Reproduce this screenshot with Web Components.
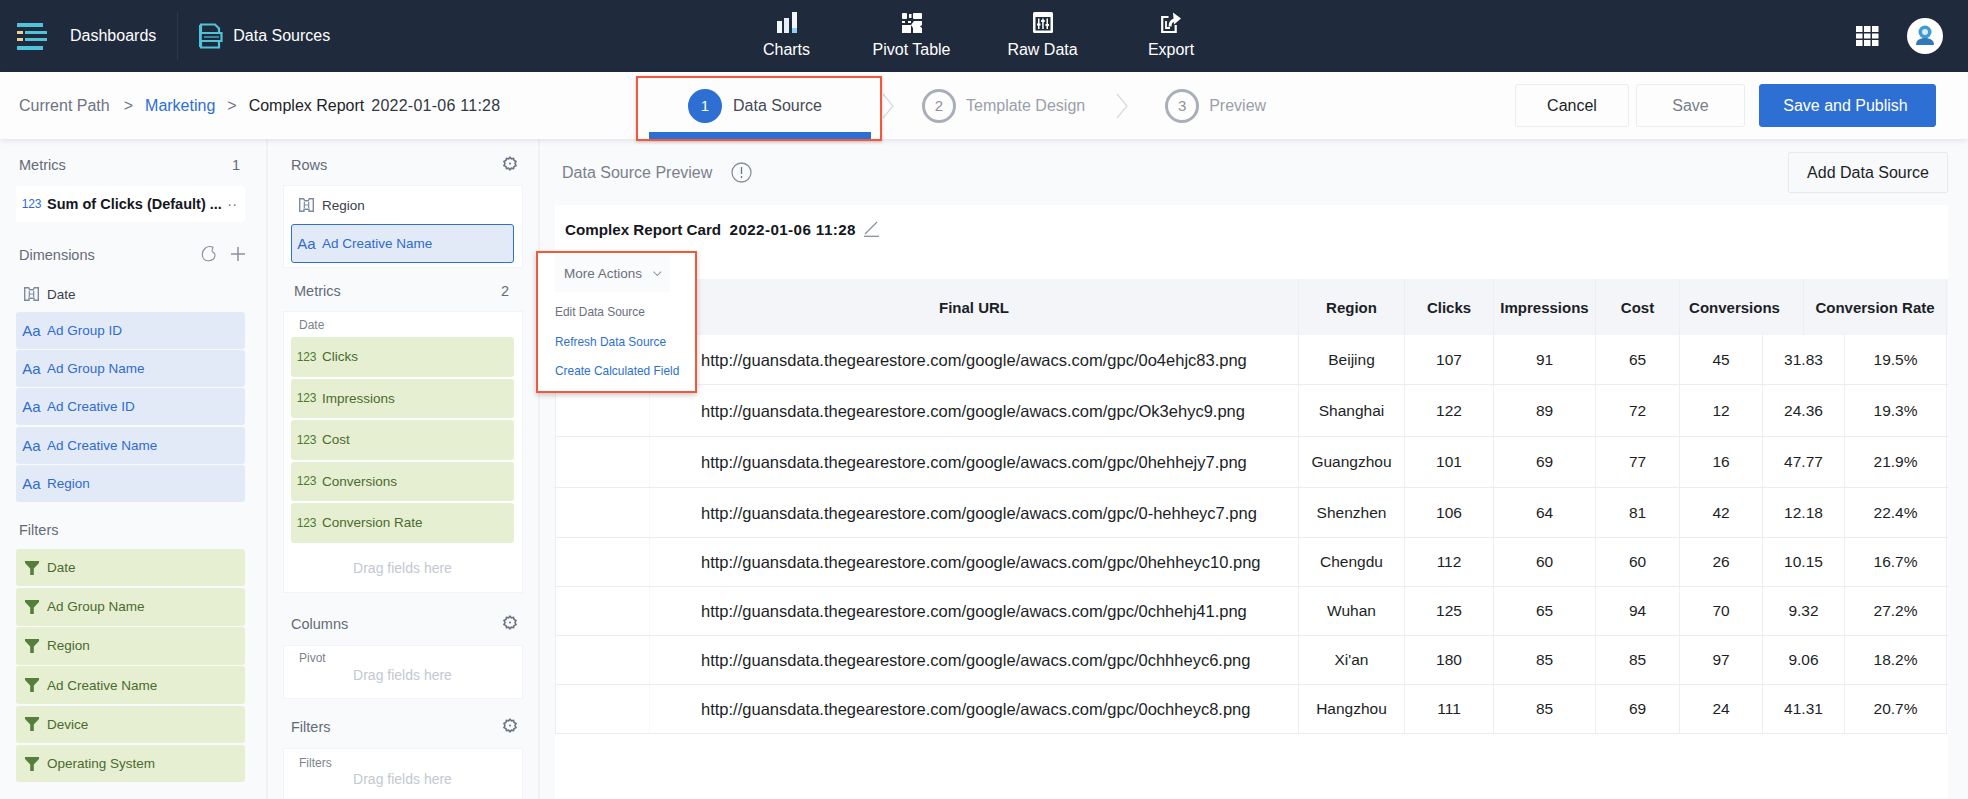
<!DOCTYPE html>
<html lang="en">
<head>
<meta charset="utf-8">
<title>Data Source</title>
<style>
  html, body { margin: 0; height: 799px; overflow: hidden; background: #f9fafc; }
  body { font-family: "Liberation Sans", Arial, sans-serif; color: #1f2430; }
  .page-body { display: flex; height: 660px; }
</style>
</head>
<body>
<top-bar></top-bar>
<sub-bar></sub-bar>
<div class="page-body">
  <left-panel></left-panel>
  <field-panel></field-panel>
  <preview-panel></preview-panel>
</div>

<script>
// All icons live here so the components just ask for them by name
const ICONS = {
  logo: `<svg width="30" height="27" viewBox="0 0 30 27"><g fill="#4fc4d8"><rect x="0" y="0" width="26" height="4"/><rect x="8" y="8" width="22" height="3"/><rect x="8" y="15" width="22" height="3"/><rect x="0" y="23" width="26" height="4"/></g><g fill="#e9d28f"><rect x="0" y="8" width="6" height="3"/><rect x="0" y="15" width="6" height="3"/></g></svg>`,
  sources: `<svg width="24" height="26" viewBox="0 0 24 26" fill="none" stroke="#4fc4d8" stroke-width="2.200"><path d="M2 10V1.500h14l4 4V10"/><path d="M1.500 10h21v8h-21z"/><path d="M5 14h15" stroke-width="1.200"/><path d="M2 18v6.500h18V18"/><path d="M1 2v22" stroke-width="3"/></svg>`,
  charts: `<svg width="20" height="21" viewBox="0 0 20 21"><rect x="0" y="9" width="5" height="12" fill="#f4f7fa"/><rect x="7" y="6" width="5" height="15" fill="#e3eef6"/><rect x="15" y="0" width="5" height="21" fill="#f4f7fa"/><rect x="15" y="16" width="5" height="5" fill="#8fd0f3"/></svg>`,
  pivot: `<svg width="20" height="21" viewBox="0 0 20 21" fill="#fff"><rect x="0" y="1" width="5" height="6" rx="1"/><rect x="7" y="2" width="2.500" height="4"/><rect x="11" y="1" width="9" height="6" rx="1"/><rect x="0" y="9" width="3" height="2"/><rect x="6" y="9" width="3" height="2"/><path d="M12 9h8v4l-2 1.500 2 1.500v5h-9v-5l-2-3z"/><path d="M0 13h9v8H0z"/></svg>`,
  raw: `<svg width="20" height="21" viewBox="0 0 20 21"><rect x="0" y="0" width="20" height="21" rx="1.500" fill="#fff"/><rect x="2.500" y="5" width="15" height="13.500" fill="#202a3d"/><g fill="#fff"><rect x="5" y="6.500" width="1.500" height="10.500"/><rect x="9.200" y="6.500" width="1.500" height="10.500"/><rect x="13.500" y="6.500" width="1.500" height="10.500"/><rect x="4" y="11.500" width="3.500" height="2"/><rect x="8.200" y="8" width="3.500" height="2"/><rect x="12.500" y="12" width="3.500" height="2"/></g></svg>`,
  exp: `<svg width="20" height="21" viewBox="0 0 20 21" fill="none" stroke="#fff" stroke-width="2.200"><path d="M7.500 5H1.200v15h13.500v-7"/><path d="M5 9v7h4" stroke-width="1.800"/><path d="M9 14.500C9 11 10.500 8.500 14 8" stroke-width="3"/><path d="M12 0.500l8 6-7 6z" fill="#fff" stroke="none"/></svg>`,
  apps: `<svg width="23" height="20" viewBox="0 0 23 20" fill="#fff"><rect x="0" y="0" width="6.500" height="6"/><rect x="8" y="0" width="6.500" height="6"/><rect x="16" y="0" width="6.500" height="6"/><rect x="0" y="7.500" width="6.500" height="5"/><rect x="8" y="7.500" width="6.500" height="5"/><rect x="16" y="7.500" width="6.500" height="5"/><rect x="0" y="14" width="6.500" height="6"/><rect x="8" y="14" width="6.500" height="6"/><rect x="16" y="14" width="6.500" height="6"/></svg>`,
  avatar: `<svg width="36" height="36" viewBox="0 0 36 36"><circle cx="18" cy="18" r="18" fill="#fff"/><circle cx="18" cy="14" r="6.500" fill="#3f9ad6"/><circle cx="18" cy="14" r="3" fill="#d6ecf8"/><path d="M9 27c0-5 4-7 9-7s9 2 9 7z" fill="#3277b8"/></svg>`,
  gear: `<svg width="14" height="15" viewBox="0 0 14 15" fill="none" stroke="#6c7380" stroke-width="1.600"><path d="M7 1.200l1.400 1.600 2.100-.3.600 2 1.900 1L12 7.500l1 2-1.900 1-.6 2-2.100-.3L7 13.800l-1.400-1.600-2.100.3-.6-2-1.900-1 1-2-1-2 1.900-1 .6-2 2.100.3z"/><circle cx="7" cy="7.500" r="1" fill="#6c7380" stroke="none"/></svg>`,
  date: `<svg width="15" height="14" viewBox="0 0 15 14" fill="none" stroke="#7d8ba0" stroke-width="1.400"><path d="M.7.700h4l1 2h3.600l1-2h4v12.600h-4.300v-2H5v2H.7z"/><path d="M5.300 4v6M9.700 4v6M5.300 7h4.400" stroke-width="1.200"/></svg>`,
  funnel: `<svg width="14" height="14" viewBox="0 0 14 14" fill="#55803b"><path d="M0 0h14v2L8.800 7.500V14H5.200V7.500L0 2z"/></svg>`,
  cloud: `<svg width="16" height="17" viewBox="0 0 16 17" fill="none" stroke="#8a919d" stroke-width="1.100"><path d="M12 2.500C10.500 1.200 7 1 4.500 3 2 5 1 8 1.500 11c.5 3 3 4.800 6 4.800 3.500 0 6.500-2.300 6.500-5.300 0-1.800-1-3-2.500-3.500-.8-1.500-.3-3 .5-4.500z"/></svg>`,
  plus: `<svg width="14" height="14" viewBox="0 0 14 14" stroke="#8a919d" stroke-width="1.500"><path d="M7 0v14M0 7h14"/></svg>`,
  pencil: `<svg width="15" height="16" viewBox="0 0 15 16" fill="none" stroke="#8a919d" stroke-width="1.300"><path d="M1 13L13 1"/><path d="M0 15.300h15"/></svg>`,
  info: `<svg width="21" height="21" viewBox="0 0 21 21" fill="none" stroke="#8a909b" stroke-width="1.300"><circle cx="10.500" cy="10.500" r="9.500"/><path d="M10.500 5v7M10.500 14v2" stroke="#6d737e"/></svg>`,
};

class TopBar extends HTMLElement {
  constructor() {
    super();
    this.shadow = this.attachShadow({ mode: "open" });
    this.shadow.innerHTML = `
      <style>
        :host { display: flex; height: 72px; background: #202a3d; color: #fff; font-size: 16px; align-items: center; }
        .left { width: 707px; padding-left: 17px; display: flex; align-items: center; flex: none; }
        .dash { margin-left: 23px; }
        .sep { width: 1px; height: 48px; background: #2f394e; margin: 0 21px 0 21px; }
        .src { margin-left: 10px; }
        .left svg { display: block; }
        .nav { display: flex; flex: none; align-self: flex-start; padding-top: 12px; }
        .nav div { display: flex; flex-direction: column; align-items: center; gap: 8px; }
        .nav svg { display: block; }
        .right { margin-left: auto; padding-right: 25px; display: flex; align-items: center; gap: 28px; }
        .right svg { display: block; }
      </style>
      <div class="left">
        ${ICONS.logo}<span class="dash">Dashboards</span>
        <span class="sep"></span>
        ${ICONS.sources}<span class="src">Data Sources</span>
      </div>
      <div class="nav">
        <div style="width:125px">${ICONS.charts}<span>Charts</span></div>
        <div style="width:125px">${ICONS.pivot}<span>Pivot Table</span></div>
        <div style="width:137px">${ICONS.raw}<span>Raw Data</span></div>
        <div style="width:120px">${ICONS.exp}<span>Export</span></div>
      </div>
      <div class="right">${ICONS.apps}${ICONS.avatar}</div>
    `;
  }
}
customElements.define("top-bar", TopBar);

class SubBar extends HTMLElement {
  constructor() {
    super();
    this.shadow = this.attachShadow({ mode: "open" });
    this.shadow.innerHTML = `
      <style>
        :host { display: flex; height: 67px; background: #fdfdfe; font-size: 16px; align-items: center; position: relative; z-index: 2; box-shadow: 0 2px 5px rgba(40,50,70,.1); }
        .crumbs { width: 630px; flex: none; padding-left: 19px; display: flex; color: #6d7480; }
        .crumbs i { font-style: normal; margin: 0 12px 0 14px; }
        .crumbs i.second { margin: 0 12px; }
        .crumbs b { font-weight: 400; color: #2e6fd3; }
        .crumbs .cur { color: #1c1f26; }
        .crumbs .stamp { color: #333842; margin-left: 7px; letter-spacing: .25px; }
        .steps { display: flex; align-items: center; height: 100%; color: #9a9fa8; position: relative; }
        .step { display: flex; align-items: center; gap: 10px; height: 100%; box-sizing: border-box; }
        .num { width: 34px; height: 34px; box-sizing: border-box; border-radius: 50%; border: 3px solid #a9aeb8; display: flex; align-items: center; justify-content: center; font-size: 15px; color: #8d929c; }
        .active { width: 222px; padding-left: 39px; color: #444a55; border-bottom: 7px solid #2e6fd3; padding-top: 7px; gap: 11px; }
        .active .num { background: #2e6fd3; border-color: #2e6fd3; color: #fff; }
        .chev { display: block; margin: 0 37px 0 31px; }
        .first-chev { margin: 0 28px 0 11px; }
        .mark { position: absolute; left: -13px; top: 4px; width: 242px; height: 61px; border: 2px solid #ef5a3c; box-shadow: 0 1px 3px rgba(120,40,20,.3); pointer-events: none; }
        .btns { margin-left: auto; padding-right: 32px; display: flex; align-items: center; }
        .btn { height: 43px; box-sizing: border-box; border: 1px solid #e9ecf1; border-radius: 3px; display: flex; align-items: center; justify-content: center; background: #fdfdfe; }
      </style>
      <div class="crumbs">
        <span>Current Path</span><i>&gt;</i><b>Marketing</b><i class="second">&gt;</i>
        <span class="cur">Complex Report</span><span class="stamp">2022-01-06 11:28</span>
      </div>
      <div class="steps">
        <div class="step active"><span class="num">1</span><span>Data Source</span></div>
        <svg class="chev first-chev" width="12" height="28" viewBox="0 0 12 28" fill="none" stroke="#d5d9e0" stroke-width="1.200"><path d="M1 2l10 12L1 26"/></svg>
        <div class="step"><span class="num">2</span><span>Template Design</span></div>
        <svg class="chev" width="12" height="28" viewBox="0 0 12 28" fill="none" stroke="#d5d9e0" stroke-width="1.200"><path d="M1 2l10 12L1 26"/></svg>
        <div class="step"><span class="num">3</span><span>Preview</span></div>
        <div class="mark"></div>
      </div>
      <div class="btns">
        <div class="btn" style="width:114px;color:#1c1f26">Cancel</div>
        <div class="btn" style="width:109px;margin-left:7px;color:#777d88">Save</div>
        <div class="btn" style="width:177px;margin-left:14px;padding-right:4px;background:#2e6fd3;border-color:#2e6fd3;color:#fff">Save and Publish</div>
      </div>
    `;
  }
}
customElements.define("sub-bar", SubBar);

// One row in the field lists, kind is blue / green / plain / white
class FieldChip extends HTMLElement {
  constructor() {
    super();
    this.shadow = this.attachShadow({ mode: "open" });
  }

  connectedCallback() {
    const icon = this.getAttribute("icon");
    let glyph = "";
    if (icon === "aa") glyph = `<span class="aa">Aa</span>`;
    else if (icon === "123") glyph = `<span class="num">123</span>`;
    else glyph = ICONS[icon];
    this.shadow.innerHTML = `
      <style>
        :host { display: flex; align-items: center; height: var(--chip-h, 36px); margin-bottom: var(--chip-gap, 1.200px); padding-left: 7px; border-radius: 3px; font-size: 13.500px; box-sizing: border-box; color: #3a404b; position: relative; }
        :host([kind="blue"]) { background: #e3eaf7; color: #2f6bd0; --chip-h: 37px; }
        :host([kind="green"]) { background: #e7efd2; color: #4a6b2e; }
        :host([kind="selected"]) { background: #e3eaf7; color: #2f6bd0; border: 1.500px solid #2e6fd3; padding-left: 6px; }
        :host([kind="white"]) { background: #fff; color: #14171d; font-weight: 700; font-size: 14.500px; }
        .icon { width: 17px; margin-right: 7px; display: flex; justify-content: center; flex: none; }
        .aa { font-size: 15px; color: #2f6bd0; }
        .num { font-size: 12px; font-weight: 400; letter-spacing: -.2px; }
        :host([kind="green"]) .num { color: #4a7a2e; }
        :host([kind="white"]) .num { color: #2f6bd0; }
        svg { display: block; }
      </style>
      <span class="icon">${glyph}</span><slot></slot>
    `;
  }
}
customElements.define("field-chip", FieldChip);

// Heading with an optional thing on the right side (count or icons)
class PanelHeading extends HTMLElement {
  constructor() {
    super();
    this.shadow = this.attachShadow({ mode: "open" });
    this.shadow.innerHTML = `
      <style>
        :host { display: flex; align-items: center; justify-content: space-between; height: 24px; font-size: 14.500px; color: #646b77; }
        .side { display: flex; align-items: center; gap: 14px; }
        ::slotted(svg) { display: block; }
      </style>
      <slot></slot><span class="side"><slot name="side"></slot></span>
    `;
  }
}
customElements.define("panel-heading", PanelHeading);

class LeftPanel extends HTMLElement {
  constructor() {
    super();
    this.shadow = this.attachShadow({ mode: "open" });
    const blue = ["Ad Group ID", "Ad Group Name", "Ad Creative ID", "Ad Creative Name", "Region"];
    const green = ["Date", "Ad Group Name", "Region", "Ad Creative Name", "Device", "Operating System"];
    this.shadow.innerHTML = `
      <style>
        :host { display: block; width: 268px; flex: none; box-sizing: border-box; padding: 14px 21px 0 16px; border-right: 2px solid #f0f2f6; background: #f9fafc; }
        panel-heading { margin: 0 0 0 3px; }
        .metric { margin-top: 9px; --chip-h: 36px; }
        .dims { margin-top: 21px; }
        .date { margin-top: 9px; --chip-gap: 0; }
        .filters { margin-top: 16px; margin-bottom: 7px; }
        .green { --chip-h: 37.700px; --chip-gap: 1.500px; }
        .dots { position: absolute; right: 8px; color: #6c7380; font-weight: 400; }
      </style>
      <panel-heading>Metrics<span slot="side" style="padding-right:5px">1</span></panel-heading>
      <field-chip class="metric" kind="white" icon="123">Sum of Clicks (Default) ...<span class="dots">··</span></field-chip>
      <panel-heading class="dims">Dimensions<span slot="side" style="display:block">${ICONS.cloud}</span><span slot="side" style="display:block">${ICONS.plus}</span></panel-heading>
      <field-chip class="date" icon="date">Date</field-chip>
      ${blue.map((n) => `<field-chip kind="blue" icon="aa">${n}</field-chip>`).join("")}
      <panel-heading class="filters">Filters</panel-heading>
      ${green.map((n) => `<field-chip class="green" kind="green" icon="funnel">${n}</field-chip>`).join("")}
    `;
  }
}
customElements.define("left-panel", LeftPanel);

// White box that fields get dropped on
class DropCard extends HTMLElement {
  constructor() {
    super();
    this.shadow = this.attachShadow({ mode: "open" });
    this.shadow.innerHTML = `
      <style>
        :host { display: block; background: #fff; margin-left: -8px; margin-right: -9px; padding: 0 8px 0 7px; border: 1px solid #f3f4f7; box-sizing: border-box; position: relative; }
        .ghost { font-size: 12px; color: #7c828d; padding-left: 8px; }
        .drag { font-size: 14px; color: #c3c8d1; text-align: center; }
      </style>
      <div class="ghost"><slot name="ghost"></slot></div>
      <slot></slot>
      <div class="drag"><slot name="drag"></slot></div>
    `;
  }
}
customElements.define("drop-card", DropCard);

class FieldPanel extends HTMLElement {
  constructor() {
    super();
    this.shadow = this.attachShadow({ mode: "open" });
    const metrics = ["Clicks", "Impressions", "Cost", "Conversions", "Conversion Rate"];
    this.shadow.innerHTML = `
      <style>
        :host { display: block; width: 272px; flex: none; box-sizing: border-box; padding: 14px 24px 0 23px; border-right: 2px solid #f0f2f6; background: #f9fafc; overflow: hidden; }
        .gear { margin-right: -3px; display: block; }
        .rows { margin-top: 8px; height: 83px; padding-top: 1px; }
        .selected { --chip-h: 39px; }
        .met { margin: 11px 0 8px 3px; padding-right: 5px; }
        .mets { height: 282px; }
        .mets .g { --chip-h: 39.500px; --chip-gap: 2px; }
        .mets span[slot="ghost"] { display: block; height: 25px; line-height: 27px; }
        .mets span[slot="drag"] { display: block; padding-top: 15px; }
        .col { margin-top: 19px; }
        .cols { margin-top: 9px; height: 54px; }
        .cols span[slot="ghost"] { display: block; line-height: 14px; padding-top: 5px; }
        .cols span[slot="drag"] { display: block; padding-top: 2px; }
        .fil { margin-top: 16px; }
        .fils { margin-top: 9px; height: 80px; }
        .fils span[slot="ghost"] { display: block; line-height: 14px; padding-top: 7px; }
        .fils span[slot="drag"] { display: block; padding-top: 1px; }
      </style>
      <panel-heading>Rows<span slot="side" class="gear">${ICONS.gear}</span></panel-heading>
      <drop-card class="rows">
        <field-chip icon="date">Region</field-chip>
        <field-chip class="selected" kind="selected" icon="aa">Ad Creative Name</field-chip>
      </drop-card>
      <panel-heading class="met">Metrics<span slot="side">2</span></panel-heading>
      <drop-card class="mets">
        <span slot="ghost">Date</span>
        ${metrics.map((n) => `<field-chip class="g" kind="green" icon="123">${n}</field-chip>`).join("")}
        <span slot="drag">Drag fields here</span>
      </drop-card>
      <panel-heading class="col">Columns<span slot="side" class="gear">${ICONS.gear}</span></panel-heading>
      <drop-card class="cols">
        <span slot="ghost">Pivot</span>
        <span slot="drag">Drag fields here</span>
      </drop-card>
      <panel-heading class="fil">Filters<span slot="side" class="gear">${ICONS.gear}</span></panel-heading>
      <drop-card class="fils">
        <span slot="ghost">Filters</span>
        <span slot="drag">Drag fields here</span>
      </drop-card>
    `;
  }
}
customElements.define("field-panel", FieldPanel);

class ActionMenu extends HTMLElement {
  constructor() {
    super();
    this.shadow = this.attachShadow({ mode: "open" });
    this.shadow.innerHTML = `
      <style>
        :host { display: block; position: absolute; left: -19px; top: 46px; width: 161px; height: 142px; box-sizing: border-box; background: #fff; border: 2px solid #ef5a3c; box-shadow: 0 2px 5px rgba(60,30,20,.25); z-index: 3; }
        .btn { margin: 2px 0 0 17px; width: 115px; height: 37px; box-sizing: border-box; padding-left: 9px; background: #fafbfc; display: flex; align-items: center; color: #6a707c; font-size: 13.500px; gap: 13px; }
        .chev { width: 5px; height: 5px; border-right: 1.500px solid #8a919d; border-bottom: 1.500px solid #8a919d; transform: rotate(45deg) translate(-2px, -1px); }
        .item { margin-left: 17px; height: 29.500px; line-height: 29.500px; white-space: nowrap; color: #2e6fd3; font-size: 11.900px; }
        .item.first { color: #6a707c; margin-top: 6px; }
      </style>
      <div class="btn">More Actions<span class="chev"></span></div>
      <div class="item first">Edit Data Source</div>
      <div class="item">Refresh Data Source</div>
      <div class="item">Create Calculated Field</div>
    `;
  }
}
customElements.define("action-menu", ActionMenu);

class DataTable extends HTMLElement {
  constructor() {
    super();
    this.shadow = this.attachShadow({ mode: "open" });
    const base = "http://guansdata.thegearestore.com/google/awacs.com/gpc/";
    const rows = [
      [50, "0o4ehjc83", "Beijing", 107, 91, 65, 45, "31.83", "19.5%"],
      [52, "Ok3ehyc9", "Shanghai", 122, 89, 72, 12, "24.36", "19.3%"],
      [51, "0hehhejy7", "Guangzhou", 101, 69, 77, 16, "47.77", "21.9%"],
      [50, "0-hehheyc7", "Shenzhen", 106, 64, 81, 42, "12.18", "22.4%"],
      [49, "0hehheyc10", "Chengdu", 112, 60, 60, 26, "10.15", "16.7%"],
      [49, "0chhehj41", "Wuhan", 125, 65, 94, 70, "9.32", "27.2%"],
      [49, "0chhheyc6", "Xi'an", 180, 85, 85, 97, "9.06", "18.2%"],
      [49, "0ochheyc8", "Hangzhou", 111, 85, 69, 24, "41.31", "20.7%"],
    ];
    const head = ["", "Final URL", "Region", "Clicks", "Impressions", "Cost", "Conversions", "Conversion Rate"];
    this.shadow.innerHTML = `
      <style>
        :host { display: block; font-size: 15.500px; color: #1c1f26; }
        .row { display: grid; grid-template-columns: 95px 649px 106px 89px 102px 84px 83px 82px 102px; border-bottom: 1px solid #e9ecf1; box-sizing: border-box; }
        .head { grid-template-columns: 95px 649px 106px 89px 102px 84px 124px 143px; height: 56px; background: #f3f5f9; font-weight: 700; font-size: 15px; border-bottom: 0; }
        .cell { display: flex; align-items: center; justify-content: center; border-right: 1px solid #eceef3; white-space: nowrap; min-width: 0; }
        .cell:first-child { border-left: 1px solid #eceef3; border-right-color: #f7f8fa; }
        .head .cell:first-child { border-right-color: transparent; }
        .head .cell:nth-child(7) { padding-right: 14px; }
        .url { font-size: 16.500px; justify-content: flex-start; padding: 1px 0 0 51px; }
      </style>
      <div class="row head">${head.map((h) => `<div class="cell">${h}</div>`).join("")}</div>
      ${rows
        .map(
          (r) => `<div class="row" style="height:${r[0]}px">
            <div class="cell"></div>
            <div class="cell url">${base}${r[1]}.png</div>
            ${r.slice(2).map((v) => `<div class="cell">${v}</div>`).join("")}
          </div>`
        )
        .join("")}
    `;
  }
}
customElements.define("data-table", DataTable);

class PreviewPanel extends HTMLElement {
  constructor() {
    super();
    this.shadow = this.attachShadow({ mode: "open" });
    this.shadow.innerHTML = `
      <style>
        :host { display: block; flex: 1; min-width: 0; box-sizing: border-box; padding: 13px 20px 0 15px; background: #f9fafc; }
        .top { display: flex; align-items: center; height: 41px; }
        .title { font-size: 16px; color: #7b818c; margin-left: 7px; }
        .top svg { display: block; margin-left: 19px; }
        .add { margin-left: auto; width: 160px; height: 41px; box-sizing: border-box; background: #f8f9fb; border: 1px solid #e7e9ee; border-radius: 2px; font-size: 16px; color: #1c1f26; display: flex; align-items: center; justify-content: center; }
        .card { margin-top: 12px; height: 594px; background: #fff; position: relative; }
        .name { display: flex; align-items: center; padding: 12px 0 0 10px; height: 24px; font-size: 15.200px; font-weight: 700; color: #14171d; gap: 8px; }
        .name .stamp { letter-spacing: .4px; }
        .name svg { display: block; }
        data-table { margin-top: 38px; }
      </style>
      <div class="top">
        <span class="title">Data Source Preview</span>${ICONS.info}
        <div class="add">Add Data Source</div>
      </div>
      <div class="card">
        <div class="name"><span>Complex Report Card&nbsp; <span class="stamp">2022-01-06 11:28</span></span>${ICONS.pencil}</div>
        <data-table></data-table>
        <action-menu></action-menu>
      </div>
    `;
  }
}
customElements.define("preview-panel", PreviewPanel);
</script>
</body>
</html>
